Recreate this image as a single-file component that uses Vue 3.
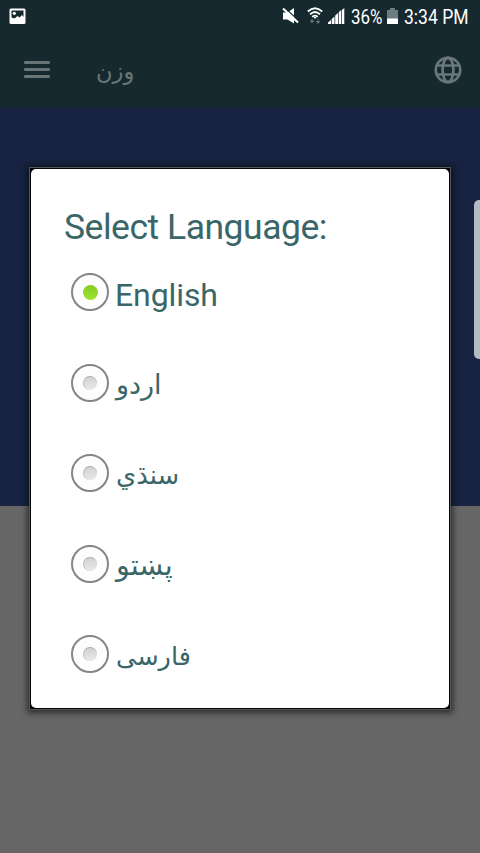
<script setup>
import { ref } from 'vue'

const selected = ref('en')
const languages = [
  { id: 'en', label: 'English', dir: 'ltr' },
  { id: 'ur', label: 'اردو', dir: 'rtl' },
  { id: 'sd', label: 'سنڌي', dir: 'rtl' },
  { id: 'ps', label: 'پښتو', dir: 'rtl' },
  { id: 'fa', label: 'فارسی', dir: 'rtl' },
]
</script>

<template>
  <div class="screen">
    <header class="top">
      <div class="status">
        <svg class="photo" width="17" height="17" viewBox="0 0 17 17">
          <rect x=".5" y=".5" width="16" height="15.5" rx="1.5" fill="#fff" />
          <path d="M2.500 2.500h12v6.500l-1.500-2-2.500 2.500-2-1.500-3 2.500-3-1z" fill="#15292d" />
          <circle cx="5.300" cy="5.300" r="1.600" fill="#fff" />
        </svg>
        <svg class="mute" width="18" height="18" viewBox="0 0 18 18">
          <path d="M1 4.500h4.500L12 0v15.500L5.500 11.500H1z" fill="#fff" />
          <path d="M2.800 0L17 12.800" stroke="#15292d" stroke-width="1.200" />
          <path d="M1 .5L16 14.500" stroke="#fff" stroke-width="2.200" />
        </svg>
        <svg class="wifi" width="16" height="18" viewBox="0 0 16 18" fill="none">
          <path d="M.8 4.500Q8-2 15.200 4.500M3 7.300Q8 2.800 13 7.300M5.300 9.800Q8 7.400 10.700 9.800" stroke="#fff" stroke-width="1.800" />
          <path d="M6.500 10h3L8 12z" fill="#fff" />
          <path d="M3.500 14.500l1.500-2 1.500 2zM5 14v2.500M9.500 14.500l1.500 2 1.500-2zM11 12v2.500" fill="#6d7c7f" stroke="#6d7c7f" stroke-width=".8" />
        </svg>
        <svg class="signal" width="17" height="17" viewBox="0 0 17 17">
          <path d="M0 16v-1.500L3 12v4zM3.700 16v-5l2.800-2.500V16zM7.200 16V7.500L10 5v11zM10.700 16V4.300l2.500-2.300V16zM13.900 16V2L16.300 0v16z" fill="#fff" />
        </svg>
        <svg class="percent" width="36" height="28">
          <text x="1" y="20" textLength="31.500" lengthAdjust="spacingAndGlyphs">36%</text>
        </svg>
        <svg class="battery" width="11" height="17" viewBox="0 0 11 17">
          <path d="M0 2h3V0h5v2h3v9H0z" fill="#6d7c7e" />
          <path d="M0 10.500h11V16H0z" fill="#fff" />
        </svg>
        <svg class="clock" width="70" height="28">
          <text x="1" y="20" textLength="64.500" lengthAdjust="spacingAndGlyphs">3:34 PM</text>
        </svg>
      </div>
      <div class="toolbar">
        <svg class="menu" width="26" height="20" viewBox="0 0 26 20">
          <path d="M1.300 2.500h23.400M1.300 9.500h23.400M1.300 16.500h23.400" stroke="#697577" stroke-width="2.800" stroke-linecap="round" />
        </svg>
        <span class="heading" dir="rtl">وزن</span>
        <svg class="globe" width="28" height="28" viewBox="0 0 28 28" fill="none" stroke="#6b7678" stroke-width="2.700">
          <circle cx="14" cy="14" r="12.200" />
          <ellipse cx="14" cy="14" rx="5.400" ry="12.200" />
          <path d="M2.800 9.500h22.400M2.800 18.500h22.400" />
        </svg>
      </div>
    </header>
    <div class="banner"></div>
    <div class="edge-handle"></div>
    <div class="overlay">
      <section class="dialog">
        <div class="panel">
          <h1>Select Language:</h1>
          <ul>
            <li v-for="lang in languages" :key="lang.id" @click="selected = lang.id">
              <span class="radio" :class="{ on: selected === lang.id }"><i></i></span>
              <span class="label" :class="lang.id" :dir="lang.dir">{{ lang.label }}</span>
            </li>
          </ul>
        </div>
      </section>
    </div>
  </div>
</template>

<style>
body { margin: 0; }
</style>

<style scoped>
.screen { position: relative; width: 480px; height: 853px; overflow: hidden; background: #666; font-family: Roboto, "Noto Sans", "DejaVu Sans", sans-serif; }
.top { height: 108px; background: linear-gradient(#15292e 0 106px, #172541 109px); }
.status { display: flex; height: 32px; padding-left: 9px; align-items: flex-start; }
.status svg { flex: none; margin-top: 8px; overflow: visible; }
.status .mute { margin-left: 256px; }
.status .wifi { margin-left: 7px; margin-top: 7px; }
.status .signal { margin-left: 5px; }
.status .percent { margin: 4px 0 0 5px; }
.status .battery { margin-left: 1px; }
.status .clock { margin: 4px 0 0 5px; }
.status text { font: 20px Roboto, sans-serif; fill: #fff; }
.toolbar { display: flex; height: 75px; padding: 0 18px 0 24px; align-items: center; }
.menu { display: block; }
.heading { margin-left: 46px; font-size: 22.500px; line-height: 40px; color: #69777a; padding-top: 3px; }
.globe { margin-left: auto; }
.banner { height: 398px; background: #172340; }
.edge-handle { position: absolute; left: 474px; top: 200px; width: 12px; height: 159px; border-radius: 5px; background: #b6bac4; }
.overlay { position: absolute; inset: 0; padding: 168px 30px 0; }
.dialog { height: 541px; background: #050505; box-shadow: 0 0 0 1px #55565a, 0 1px 6px 3px rgba(0, 0, 0, .55); }
.panel { box-sizing: border-box; height: 539px; margin: 0 1px; padding: 37px 33px 0; border-radius: 5px; background: #fff; color: #3a6668; }
.dialog { box-sizing: border-box; padding-top: 1px; }
h1 { margin: 0; font-size: 35.500px; line-height: 43px; font-weight: 400; letter-spacing: -.48px; white-space: nowrap; }
ul { margin: 0; padding: 0 0 0 7px; list-style: none; }
li { display: flex; height: 90.600px; align-items: flex-start; }
.radio { box-sizing: border-box; display: grid; flex: none; width: 38px; height: 38px; margin-top: 24px; place-items: center; border: 2px solid #858585; border-radius: 50%; background: #fdfdfd; }
.radio i { box-sizing: border-box; width: 14px; height: 14px; border-radius: 50%; border-top: 1px solid #aaa; border-left: 1px solid #bbb; background: linear-gradient(#d2d2d2, #e9e9e9); }
.radio.on i { width: 15px; height: 15px; border: 0; background: linear-gradient(#86c923, #a0e52f); }
.label { margin: 23px 0 0 7px; font-size: 27px; line-height: 44px; white-space: nowrap; }
.label.en { margin: 24px 0 0 6px; font-size: 32px; letter-spacing: -.1px; }
.label.sd { font-size: 25.800px; }
.label.ps { font-size: 28.500px; }
.label.fa { font-size: 25.500px; }
</style>
